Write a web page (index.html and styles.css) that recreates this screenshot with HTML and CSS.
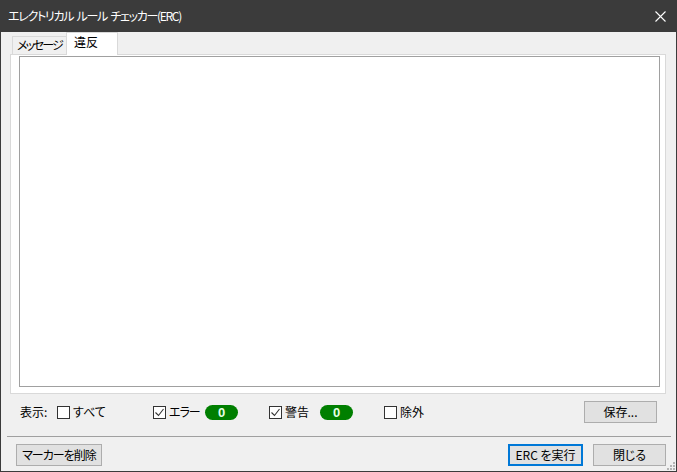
FILE: index.html
```html
<!DOCTYPE html>
<html lang="ja">
<head>
<meta charset="utf-8">
<link rel="stylesheet" href="styles.css">
</head>
<body>
<div class="window">
  <div class="titlebar">
    <span class="title">エレクトリカル ルール チェッカー(ERC)</span>
    <svg class="close" width="11" height="11" viewBox="0 0 11 11"><path d="M0.5 0.5L10.5 10.5M10.5 0.5L0.5 10.5" stroke="#fff" stroke-width="1.1" fill="none"/></svg>
  </div>
  <div class="body">
    <div class="notebook">
      <div class="tabs">
        <div class="tab msg">メッセージ</div>
        <div class="tab active">違反</div>
      </div>
      <div class="page">
        <div class="list"></div>
      </div>
    </div>
    <div class="filters">
      <span class="lbl">表示:</span>
      <label class="cbg g1"><span class="cb"></span>すべて</label>
      <label class="cbg g2"><span class="cb checked"><svg width="11" height="11" viewBox="0 0 11 11"><path d="M1.5 5.5L4.5 8.5L9.5 2" stroke="#333" stroke-width="1.1" fill="none"/></svg></span><span class="kana">エラー</span></label>
      <span class="badge">0</span>
      <label class="cbg g3"><span class="cb checked"><svg width="11" height="11" viewBox="0 0 11 11"><path d="M1.5 5.5L4.5 8.5L9.5 2" stroke="#333" stroke-width="1.1" fill="none"/></svg></span>警告</label>
      <span class="badge">0</span>
      <label class="cbg g4"><span class="cb"></span>除外</label>
      <button class="btn save">保存...</button>
    </div>
  </div>
  <div class="sep"></div>
  <div class="actions">
    <button class="btn clear kana">マーカーを削除</button>
    <button class="btn run">ERC を実行</button>
    <button class="btn closebtn">閉じる</button>
  </div>
  <svg class="grip" width="9" height="9" viewBox="0 0 9 9"><g fill="#b4b4b4"><rect x="7" y="1" width="2" height="2"/><rect x="4" y="4" width="2" height="2"/><rect x="7" y="4" width="2" height="2"/><rect x="1" y="7" width="2" height="2"/><rect x="4" y="7" width="2" height="2"/><rect x="7" y="7" width="2" height="2"/></g></svg>
</div>
</body>
</html>
```
FILE: styles.css
```css
* { box-sizing: border-box; }
html, body { margin: 0; padding: 0; }
body {
  width: 677px;
  height: 472px;
  overflow: hidden;
  background: #f0f0f0;
  font-family: "Noto Sans CJK JP", "Noto Sans", sans-serif;
  font-feature-settings: "palt";
  font-size: 12px;
  color: #000;
  white-space: nowrap;
}
.kana { letter-spacing: -1px; }
.window {
  position: relative;
  width: 677px;
  height: 472px;
  border: 1px solid #3b3b3b;
  border-top: 0;
  display: flex;
  flex-direction: column;
  background: #f0f0f0;
}
.titlebar {
  height: 32px;
  margin: 0 -1px;
  background: #3b3b3b;
  display: flex;
  align-items: center;
  padding-left: 8px;
  position: relative;
}
.title {
  color: #fff;
  font-size: 12px;
  line-height: 16px;
  letter-spacing: -1.3px;
  word-spacing: 2px;
}
.close {
  position: absolute;
  left: 655px;
  top: 11px;
}
.body {
  padding: 0 10px 0 9px;
}
.notebook {
  display: flex;
  flex-direction: column;
}
.tabs {
  height: 22px;
  display: flex;
  align-items: flex-end;
  padding-left: 2px;
  position: relative;
  z-index: 1;
}
.tab {
  height: 18px;
  border: 1px solid #d9d9d9;
  border-bottom: 0;
  border-right: 0;
  background: #f0f0f0;
  line-height: 16px;
  color: #000;
}
.tab.msg {
  width: 54px;
  padding-left: 4px;
  letter-spacing: -2px;
  overflow: visible;
}
.tab.active {
  height: 23px;
  margin-bottom: -1px;
  background: #fff;
  border-right: 1px solid #d9d9d9;
  width: 52px;
  padding-left: 7px;
  line-height: 18px;
}
.page {
  height: 340px;
  border: 1px solid #d9d9d9;
  background: #fff;
  padding: 1px 5px 6px 8px;
  display: flex;
}
.list {
  flex: 1;
  border: 1px solid #a0a0a0;
  background: #fff;
}
.filters {
  margin-top: 7px;
  height: 22px;
  display: flex;
  align-items: center;
  padding-left: 10px;
  padding-right: 9px;
}
.lbl {
  width: 37px;
  line-height: 16px;
}
.cbg {
  display: flex;
  align-items: center;
  line-height: 16px;
}
.g1 { width: 96px; }
.g2 { width: 52px; }
.g3 { width: 51px; }
.cb {
  width: 13px;
  height: 13px;
  border: 1px solid #333;
  background: #fff;
  margin-right: 3px;
  display: flex;
  align-items: center;
  justify-content: center;
}
.cb svg { display: block; }
.badge {
  width: 33px;
  height: 15px;
  border-radius: 8px;
  background: #007f00;
  color: #e6ffe6;
  font-family: "Liberation Sans", sans-serif;
  font-weight: bold;
  font-size: 13px;
  line-height: 15px;
  text-align: center;
  margin-right: 31px;
}
.btn {
  font-family: "Noto Sans CJK JP", "Noto Sans", sans-serif;
  font-feature-settings: "palt";
  font-size: 12px;
  color: #000;
  height: 22px;
  background: #e1e1e1;
  border: 1px solid #adadad;
  padding: 0;
  line-height: 18px;
}
.save {
  margin-left: auto;
  width: 73px;
}
.sep {
  margin: 13px 5px 0 6px;
  height: 1px;
  background: #a0a0a0;
}
.actions {
  margin-top: 7px;
  display: flex;
  padding: 0 10px 0 15px;
}
.clear { width: 86px; }
.run {
  margin-left: auto;
  width: 75px;
  border: 2px solid #0078d7;
}
.closebtn {
  margin-left: 10px;
  width: 73px;
}
.grip {
  position: absolute;
  right: 1px;
  bottom: 1px;
}
```
